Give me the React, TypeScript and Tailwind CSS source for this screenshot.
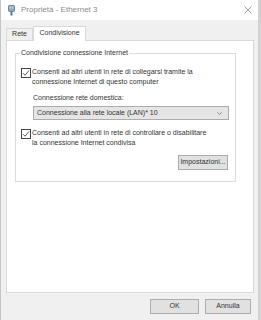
import { ReactNode } from 'react'

const FONT = { fontFamily: '"Liberation Sans", Arial, sans-serif' }

function CheckBox() {
  return (
    <div className="mt-[1px] flex h-[10px] w-[10px] shrink-0 items-center justify-center border border-[#444444] bg-white">
      <svg width="8" height="8" viewBox="0 0 8 8">
        <path d="M1 4.2 L3 6.2 L7 1.5" fill="none" stroke="#333" strokeWidth="0.8" />
      </svg>
    </div>
  )
}

function CheckRow({ children }: { children: ReactNode }) {
  return (
    <div className="flex gap-[1px]">
      <CheckBox />
      <div className="leading-[10px]">{children}</div>
    </div>
  )
}

function WinButton({ label, width }: { label: string; width: string }) {
  return (
    <div
      className={`flex h-[15px] items-center justify-center border border-[#adadad] bg-[#e1e1e1] text-[7px] text-[#333333] ${width}`}
    >
      {label}
    </div>
  )
}

export default function App() {
  return (
    <div
      className="flex h-[320px] w-[261px] flex-col border-l border-r-[3px] border-l-[#c4c4c4] border-r-[#d2d2d2] bg-[#f0f0f0] text-[7px] text-[#333333]"
      style={FONT}
    >
      {/* Title bar */}
      <div className="flex h-[20px] items-center bg-white pl-[7px] pr-[6px]">
        <svg width="7" height="11" viewBox="0 0 7 11">
          <rect x="0.5" y="0.5" width="6" height="6" rx="0.8" fill="#8fa6c0" stroke="#5b7590" strokeWidth="0.8" />
          <rect x="1.8" y="1.6" width="1" height="2" fill="#e8eef4" />
          <rect x="4.2" y="1.6" width="1" height="2" fill="#e8eef4" />
          <rect x="2.5" y="7" width="2" height="3.5" fill="#5b7590" />
        </svg>
        <span className="ml-[6px] text-[8px] text-[#8c8c8c]">Proprietà - Ethernet 3</span>
        <svg className="ml-auto" width="8" height="8" viewBox="0 0 8 8">
          <path d="M0.5 0.5 L7.5 7.5 M7.5 0.5 L0.5 7.5" stroke="#8a8a8a" strokeWidth="0.8" />
        </svg>
      </div>

      {/* Tabs */}
      <div className="flex h-[21px] items-end pl-[5px]">
        <div className="flex h-[13px] w-[27px] items-center justify-center border border-[#d9d9d9] bg-[#f0f0f0] pb-px">
          Rete
        </div>
        <div className="relative z-10 flex h-[15px] w-[53px] items-center justify-center border border-b-0 border-[#d9d9d9] bg-white pb-[2px]">
          Condivisione
        </div>
      </div>

      {/* Panel */}
      <div className="-mt-px ml-[5px] h-[253px] w-[248px] border border-[#d9d9d9] bg-white pt-[12px] pl-[8px]">
        <div className="relative flex h-[129px] w-[221px] flex-col border border-[#dcdcdc] pt-[13px] pl-[5px] pr-[7px]">
          <span className="absolute -top-[6px] left-[4px] bg-white px-[1px] leading-[10px]">
            Condivisione connessione Internet
          </span>

          <CheckRow>
            Consenti ad altri utenti in rete di collegarsi tramite la
            <br />
            connessione Internet di questo computer
          </CheckRow>

          <div className="mt-[6px] ml-[12px] leading-[10px]">Connessione rete domestica:</div>

          <div className="mt-[3px] ml-[12px] flex h-[14px] w-[196px] items-center border border-[#acacac] bg-[#e5e5e5] pl-[3px] pr-[6px]">
            <span>Connessione alla rete locale (LAN)* 10</span>
            <svg className="ml-auto" width="5" height="3" viewBox="0 0 5 3">
              <path d="M0.3 0.3 L2.5 2.5 L4.7 0.3" fill="none" stroke="#666" strokeWidth="0.7" />
            </svg>
          </div>

          <div className="mt-[8px]">
            <CheckRow>
              Consenti ad altri utenti in rete di controllare o disabilitare
              <br />
              la connessione Internet condivisa
            </CheckRow>
          </div>

          <div className="mt-[7px] flex justify-end">
            <WinButton label="Impostazioni..." width="w-[50px]" />
          </div>
        </div>
      </div>

      {/* Footer buttons */}
      <div className="flex justify-end gap-[6px] pt-[6px] pr-[7px]">
        <WinButton label="OK" width="w-[49px]" />
        <WinButton label="Annulla" width="w-[46px]" />
      </div>
    </div>
  )
}
